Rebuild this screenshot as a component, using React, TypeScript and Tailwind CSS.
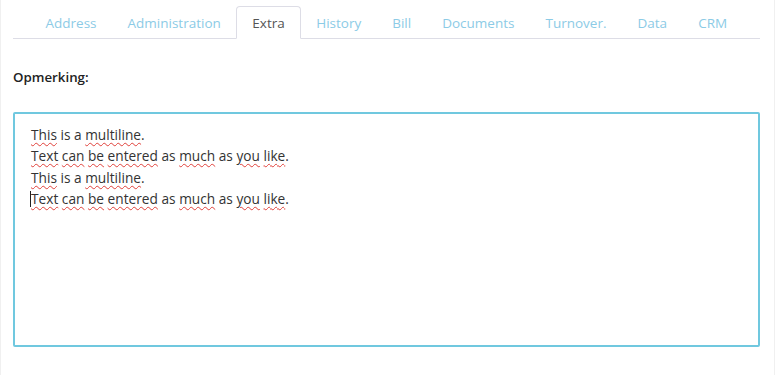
import React from "react";

const tabs = ["Address", "Administration", "Extra", "History", "Bill", "Documents", "Turnover.", "Data", "CRM"];

function W({ children }: { children: React.ReactNode }) {
  return (
    <span className="underline decoration-wavy decoration-[#e0403a] decoration-1 underline-offset-[2px]">{children}</span>
  );
}

export default function App() {
  return (
    <div
      className="w-[775px] h-[375px] bg-white border-x border-[#f0f0f0] overflow-hidden"
      style={{ fontFamily: '"Open Sans", "Noto Sans", sans-serif' }}
    >
      <div className="pl-[12px] pr-[14px]">
        <div className="pt-[6px] border-b border-[#dddde6] flex pl-[17px]">
          {tabs.map((t) =>
            t === "Extra" ? (
              <div
                key={t}
                className="h-[33px] -mb-px px-[15px] pt-[1px] flex items-center text-[13.5px] text-[#555] bg-white border border-[#dddde6] border-b-white rounded-t-[4px]"
              >
                {t}
              </div>
            ) : (
              <div key={t} className="h-[32px] px-[15.5px] pt-[2px] flex items-center text-[13.5px] text-[#8ccbe6]">
                {t}
              </div>
            )
          )}
        </div>
        <div className="mt-[29px] h-[20px] flex items-center text-[13.3px] font-semibold text-[#222]">Opmerking:</div>
        <div className="mt-[24px] h-[235px] border-2 border-[#70c8df] rounded-[2px] pl-[16px] pt-[10px] text-[13.7px] leading-[21.4px] text-[#333]">
          <div>
            <W>This</W> is a <W>multiline</W>.
          </div>
          <div>
            <W>Text</W> <W>can</W> <W>be</W> <W>entered</W> as <W>much</W> as <W>you</W> <W>like</W>.
          </div>
          <div>
            <W>This</W> is a <W>multiline</W>.
          </div>
          <div className="relative">
            <span className="absolute left-[-1px] top-[3px] w-px h-[16px] bg-[#222]" />
            <W>Text</W> <W>can</W> <W>be</W> <W>entered</W> as <W>much</W> as <W>you</W> <W>like</W>.
          </div>
        </div>
      </div>
    </div>
  );
}
